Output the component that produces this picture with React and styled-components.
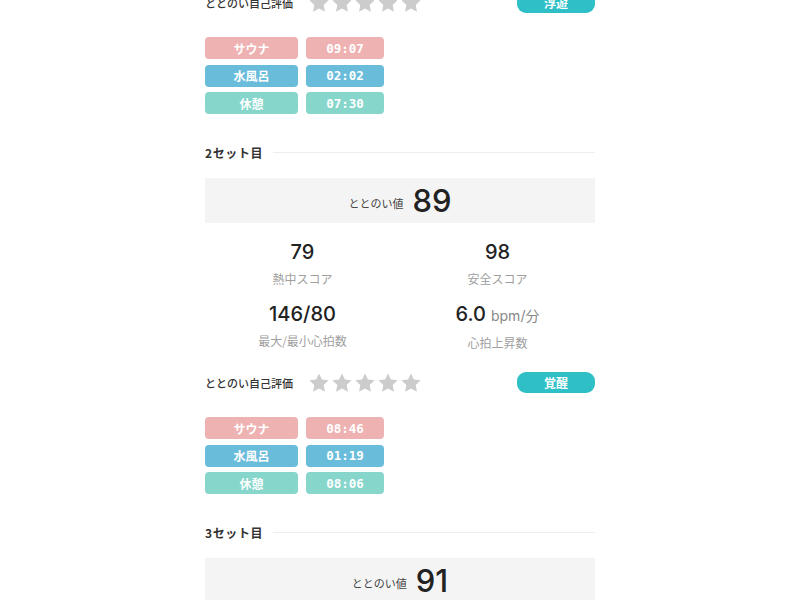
import React from "react";
import styled, { createGlobalStyle } from "styled-components";

const Global = createGlobalStyle`
  html, body { margin: 0; padding: 0; background: #fff; }
  body { font-family: "Noto Sans CJK JP", "Noto Sans", sans-serif; color: #333; overflow: hidden; }
`;

const Page = styled.div`
  width: 390px;
  margin: -236px auto 0;
`;

const SetBlock = styled.section`
  display: flex;
  flex-direction: column;
  padding-bottom: 30px;
`;

const Heading = styled.div`
  display: flex;
  align-items: center;
  gap: 10px;
  height: 16px;
  font-size: 12px;
  font-weight: 700;
  color: #333;
  letter-spacing: 0.6px;
`;

const Line = styled.div`
  flex: 1;
  height: 1px;
  background: #eeeeee;
`;

const ValueBox = styled.div`
  margin-top: 18px;
  height: 45px;
  background: #f4f4f4;
  display: flex;
  align-items: center;
  justify-content: center;
  gap: 9px;
`;

const ValueLabel = styled.span`
  font-size: 11px;
  color: #444;
  padding-top: 4px;
`;

const BigNum = styled.span`
  font-family: Inter, "Liberation Sans", sans-serif;
  font-size: 31px;
  font-weight: 500;
  color: #222;
  line-height: 1;
`;

const Scores = styled.div`
  margin-top: 17px;
  display: grid;
  grid-template-columns: 1fr 1fr;
  row-gap: 15px;
`;

const Score = styled.div`
  display: flex;
  flex-direction: column;
  align-items: center;
  gap: 7px;
`;

const ScoreValue = styled.div`
  font-family: Inter, "Liberation Sans", "Noto Sans CJK JP", sans-serif;
  font-size: 20px;
  font-weight: 500;
  line-height: 24px;
  color: #222;
`;

const Unit = styled.span`
  font-size: 14px;
  font-weight: 400;
  color: #888;
  margin-left: 5px;
`;

const ScoreLabel = styled.div`
  font-size: 12px;
  line-height: 16px;
  color: #a0a0a0;
`;

const RatingRow = styled.div`
  margin-top: 21px;
  height: 21px;
  display: flex;
  align-items: center;
`;

const RatingLabel = styled.span`
  font-size: 11px;
  font-weight: 500;
  color: #333;
  width: 103px;
`;

const Stars = styled.div`
  display: flex;
  gap: 1px;
  flex: 1;
`;

const Badge = styled.div`
  width: 78px;
  height: 21px;
  border-radius: 9px;
  background: #2ec0c6;
  color: #fff;
  font-size: 12px;
  font-weight: 700;
  display: flex;
  align-items: center;
  justify-content: center;
`;

const Timings = styled.div`
  margin-top: 24px;
  display: grid;
  grid-template-columns: 93px 78px;
  column-gap: 8px;
  row-gap: 5.5px;
`;

const colors = {
  sauna: "#eeb2b2",
  water: "#6abcdb",
  rest: "#86d6cc",
};

const Pill = styled.div`
  height: 22px;
  border-radius: 4px;
  background: ${(p) => colors[p.$kind]};
  color: #fff;
  display: flex;
  align-items: center;
  justify-content: center;
  font-size: 12px;
  font-weight: 700;
  font-family: ${(p) =>
    p.$mono
      ? `"DejaVu Sans Mono", "Liberation Mono", monospace`
      : `"Noto Sans CJK JP", sans-serif`};
  ${(p) => (p.$mono ? "font-size: 12.5px;" : "")}
`;

const Star = () => (
  <svg width="22" height="22" viewBox="0 0 24 24">
    <path
      d="M12 1.5l3.2 6.7 7.3.9-5.4 5.1 1.4 7.3L12 17.9l-6.5 3.6 1.4-7.3-5.4-5.1 7.3-.9z"
      fill="#cccccc"
    />
  </svg>
);

const sets = [
  {
    n: 1,
    value: 88,
    s: [["80", "熱中スコア"], ["95", "安全スコア"], ["140/78", "最大/最小心拍数"], ["6.2", "心拍上昇数", true]],
    badge: "浮遊",
    t: ["09:07", "02:02", "07:30"],
  },
  {
    n: 2,
    value: 89,
    s: [["79", "熱中スコア"], ["98", "安全スコア"], ["146/80", "最大/最小心拍数"], ["6.0", "心拍上昇数", true]],
    badge: "覚醒",
    t: ["08:46", "01:19", "08:06"],
  },
  {
    n: 3,
    value: 91,
    s: [["82", "熱中スコア"], ["97", "安全スコア"], ["150/81", "最大/最小心拍数"], ["6.4", "心拍上昇数", true]],
    badge: "覚醒",
    t: ["08:30", "01:25", "08:10"],
  },
];

const kinds = [
  ["sauna", "サウナ"],
  ["water", "水風呂"],
  ["rest", "休憩"],
];

export default function App() {
  return (
    <>
      <Global />
      <Page>
        {sets.map((set) => (
          <SetBlock key={set.n}>
            <Heading>
              {set.n}セット目
              <Line />
            </Heading>
            <ValueBox>
              <ValueLabel>ととのい値</ValueLabel>
              <BigNum>{set.value}</BigNum>
            </ValueBox>
            <Scores>
              {set.s.map(([v, l, unit]) => (
                <Score key={l}>
                  <ScoreValue>
                    {v}
                    {unit && <Unit>bpm/分</Unit>}
                  </ScoreValue>
                  <ScoreLabel>{l}</ScoreLabel>
                </Score>
              ))}
            </Scores>
            <RatingRow>
              <RatingLabel>ととのい自己評価</RatingLabel>
              <Stars>
                {[0, 1, 2, 3, 4].map((i) => (
                  <Star key={i} />
                ))}
              </Stars>
              <Badge>{set.badge}</Badge>
            </RatingRow>
            <Timings>
              {kinds.map(([k, label], i) => (
                <React.Fragment key={k}>
                  <Pill $kind={k}>{label}</Pill>
                  <Pill $kind={k} $mono>
                    {set.t[i]}
                  </Pill>
                </React.Fragment>
              ))}
            </Timings>
          </SetBlock>
        ))}
      </Page>
    </>
  );
}
